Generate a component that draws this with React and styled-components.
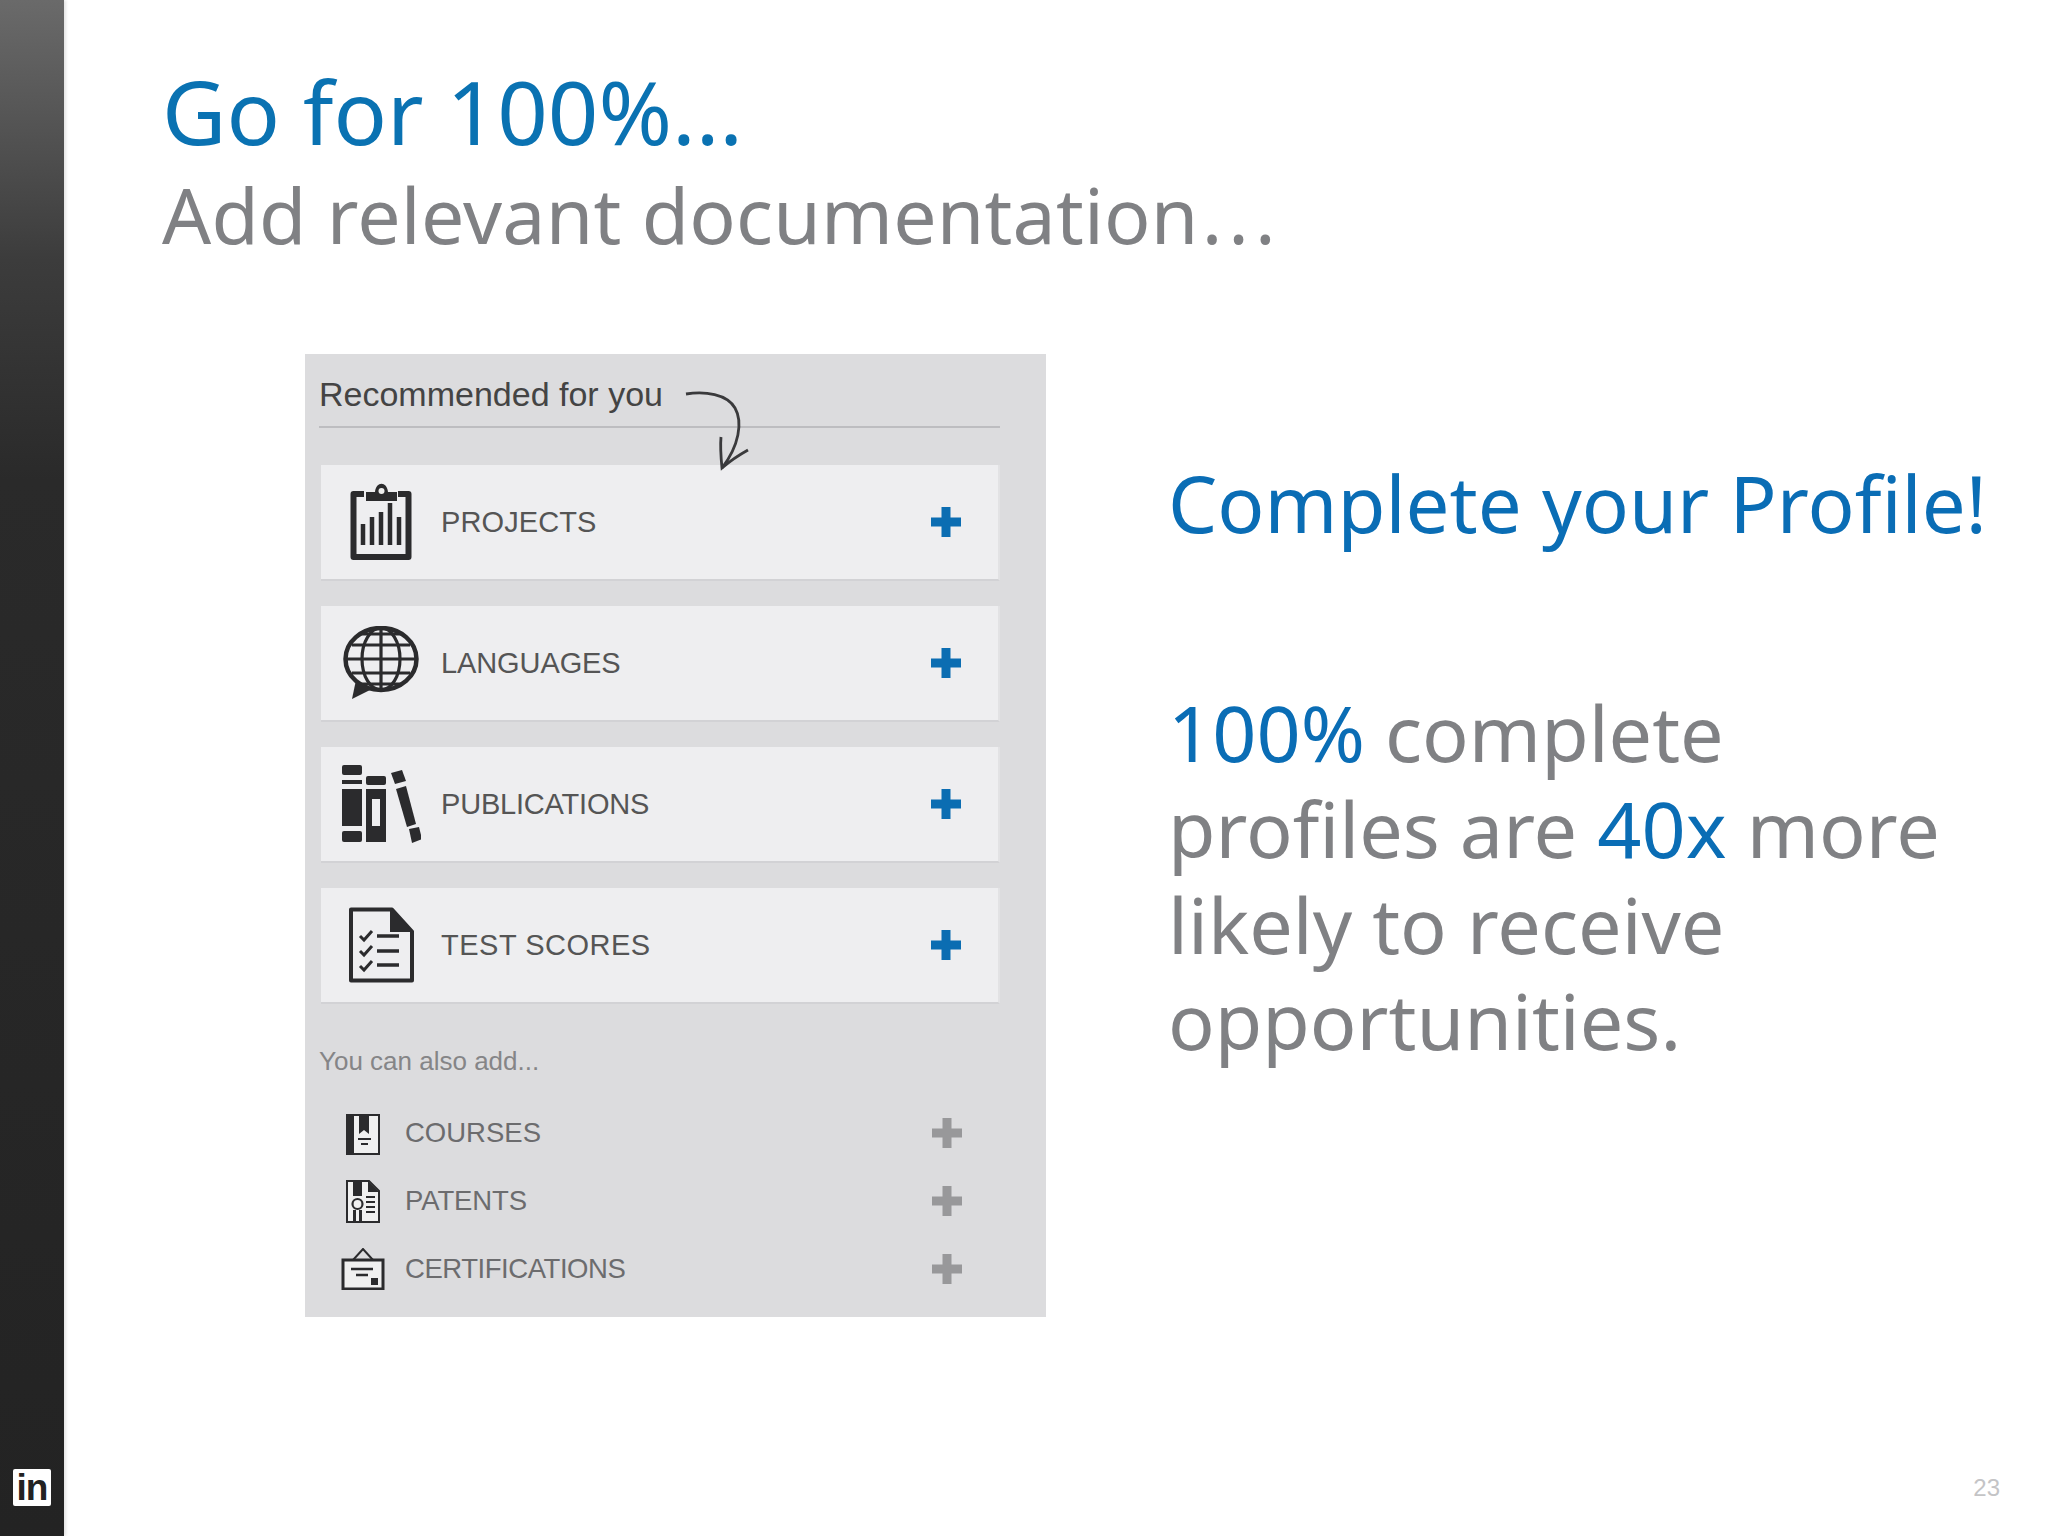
import React from "react";
import styled, { createGlobalStyle } from "styled-components";

const Global = createGlobalStyle`
  html, body { margin: 0; padding: 0; background: #fff; }
  #root { width: 2048px; height: 1536px; overflow: hidden; }
`;
const Slide = styled.div`
  display: flex; width: 2048px; height: 1536px; background: #fff;
  font-family: "Noto Sans", "Open Sans", sans-serif;
`;
const Sidebar = styled.aside`
  width: 64px; flex: none; box-sizing: border-box;
  display: flex; flex-direction: column; justify-content: flex-end; align-items: flex-start;
  padding: 0 0 30px 13px;
  background: linear-gradient(180deg, #6a6a6a 0, #3c3c3c 260px, #2a2a2a 480px, #232323 100%);
  box-shadow: 2px 0 3px #e4e4e4;
`;
const LinkedInBadge = styled.div`
  width: 38px; height: 37px; background: #fff; border-radius: 2px;
  display: flex; align-items: center; justify-content: center;
  font: 700 37px/37px "Liberation Sans", sans-serif; letter-spacing: -1px; color: #222;
`;
const Main = styled.main`
  flex: 1; min-width: 0; display: flex; flex-direction: column;
  padding: 56px 48px 0 98px;
`;
const Title = styled.h1`
  margin: 0; font-weight: 400; font-size: 88.500px; line-height: 110px; color: #0a72b2;
`;
const Subtitle = styled.h2`
  margin: -1px 0 0; font-weight: 400; font-size: 77px; line-height: 100px; color: #808184;
  letter-spacing: 0.2px;
`;
const Dots = styled.span`
  margin-left: 3px; letter-spacing: 6px;
`;
const Content = styled.div`
  display: flex; align-items: flex-start; margin-top: 89px; padding-left: 143px;
`;
const Panel = styled.section`
  position: relative; width: 741px; height: 963px; flex: none; box-sizing: border-box;
  background: #dcdcde; padding: 0 46px 0 16px;
  font-family: "Liberation Sans", Arial, sans-serif;
`;
const PanelHead = styled.div`
  height: 74px; box-sizing: border-box; border-bottom: 2px solid #bdbdc0;
  margin: 0 0 37px -2px; padding-top: 20px;
  font-size: 34px; line-height: 40px; color: #444;
`;
const Arrow = styled.svg`
  position: absolute; left: 378px; top: 34px; width: 70px; height: 84px;
`;
const CardList = styled.div`
  display: flex; flex-direction: column; gap: 25px;
`;
const Card = styled.div`
  height: 116px; box-sizing: border-box; display: flex; align-items: center;
  background: #eeeef0; border-bottom: 2px solid #d2d2d5; border-right: 2px solid #e2e2e4;
  padding-right: 36px;
`;
const CardIcon = styled.div`
  width: 120px; flex: none; display: flex; justify-content: center; align-items: center;
`;
const CardLabel = styled.span`
  flex: 1; font-size: 29px; line-height: 34px; color: #555;
  letter-spacing: ${(p) => p.$track}px;
`;
const PlusIcon = styled.svg`
  width: 32px; height: 32px; flex: none; margin-right: ${(p) => p.$shift}px;
`;
const AlsoLabel = styled.div`
  margin: 39px 0 20px -2px; font-size: 26px; line-height: 36px; color: #858587;
`;
const SmallRow = styled.div`
  height: 68px; display: flex; align-items: center; padding-right: 36px;
`;
const SmallIcon = styled.div`
  width: 84px; flex: none; display: flex; justify-content: center; align-items: center;
`;
const SmallLabel = styled.span`
  flex: 1; font-size: 27.5px; line-height: 34px; color: #6c6c6e;
  letter-spacing: ${(p) => p.$track}px;
`;
const Pitch = styled.div`
  margin-left: 122px; width: 860px; padding-top: 99px; flex: none;
`;
const Headline = styled.div`
  font-size: 78px; line-height: 100px; color: #0a6db5; white-space: nowrap;
`;
const Body = styled.p`
  margin: 131px 0 0; font-size: 77.300px; line-height: 96px; color: #808184; white-space: nowrap;
`;
const Accent = styled.span`
  color: #0a6db5;
`;
const Footer = styled.footer`
  margin-top: auto; padding-bottom: 34px; text-align: right;
  font: 400 24px/28px "Liberation Sans", sans-serif; color: #c4c4c6;
`;

const INK = "#2b2b2d";

const ProjectsIcon = () => (
  <svg width="62" height="78" viewBox="0 0 62 78">
    <path d="M14 11H3.500v63h55V11H48" fill="none" stroke={INK} strokeWidth="6" strokeLinejoin="round" />
    <path d="M16 18V9h9c1-11 12-11 13 0h9v9z" fill={INK} />
    <circle cx="31.500" cy="8" r="3" fill="#eee" />
    <path d="M13 62V41M22 62V34M31 62V29M40 62V20M49 62V34" stroke={INK} strokeWidth="4.500" fill="none" />
  </svg>
);
const GlobeIcon = () => (
  <svg width="76" height="74" viewBox="0 0 76 74" fill="none" stroke={INK} strokeWidth="3.200">
    <ellipse cx="38" cy="33" rx="35.500" ry="31" strokeWidth="4.500" />
    <ellipse cx="38" cy="33" rx="19" ry="31" />
    <path d="M38 2v62M3 33h70M9 19h58M9 47h58M18 8h40M18 58h40" />
    <path d="M13 54 9 73l20-10z" fill={INK} stroke="none" />
  </svg>
);
const BooksIcon = () => (
  <svg width="80" height="78" viewBox="0 0 80 78" fill={INK}>
    <rect x="1" y="0" width="20" height="10" rx="2" />
    <rect x="1" y="15" width="20" height="4" />
    <rect x="1" y="24" width="20" height="37" />
    <rect x="1" y="66" width="20" height="11" rx="2" />
    <rect x="25" y="11" width="20" height="9" rx="2" />
    <path d="M25 24h20v53H25zM31 34v27h8V34z" fillRule="evenodd" />
    <path d="M50 8l11-3 4 11-11 3z" />
    <path d="M55 24l10-3 10 38-9 3z" />
    <path d="M68 64l10-2 3 12-10 4z" />
  </svg>
);
const ScoresIcon = () => (
  <svg width="66" height="76" viewBox="0 0 66 76">
    <path d="M3 2.500h41l20 22V73.500H3z" fill="none" stroke={INK} strokeWidth="4" strokeLinejoin="round" />
    <path d="M42 2l22 23H42z" fill={INK} />
    <path d="M12 29l4 4 8-9M12 44l4 4 8-9M12 59l4 4 8-9" fill="none" stroke={INK} strokeWidth="3" />
    <path d="M29 29h22M29 44h22M29 58h22" stroke={INK} strokeWidth="3.600" />
  </svg>
);
const CoursesIcon = () => (
  <svg width="34" height="43" viewBox="0 0 34 43">
    <path d="M1 3h32v39H1z" fill="#f0f0f0" stroke={INK} strokeWidth="2" />
    <path d="M1 3h7v39H1z" fill={INK} />
    <path d="M13 3h10v19l-5-4-5 4z" fill={INK} />
    <path d="M12 27h13M15 32h7" stroke={INK} strokeWidth="2" />
  </svg>
);
const PatentsIcon = () => (
  <svg width="34" height="43" viewBox="0 0 34 43">
    <path d="M1 1h22l10 10v31H1z" fill="#f0f0f0" stroke={INK} strokeWidth="2" />
    <path d="M22 1l11 11H22z" fill={INK} />
    <path d="M7 1h9v15H7zM7 30h3v11H7zM13 30h3v11h-3z" fill={INK} />
    <circle cx="11.500" cy="24" r="5" fill="none" stroke={INK} strokeWidth="2.200" />
    <path d="M20 17h9M20 22h9M20 27h9M20 32h9" stroke={INK} strokeWidth="2" />
  </svg>
);
const CertIcon = () => (
  <svg width="44" height="42" viewBox="0 0 44 42">
    <path d="M12 12 22 1l10 11" fill="none" stroke={INK} strokeWidth="2" />
    <rect x="2" y="12" width="40" height="29" fill="#f0f0f0" stroke={INK} strokeWidth="3" />
    <path d="M10 21h22M15 27h12" stroke={INK} strokeWidth="2.400" />
    <rect x="30" y="30" width="7" height="7" fill={INK} />
  </svg>
);
const Plus = ({ color, shift = 0 }) => (
  <PlusIcon viewBox="0 0 32 32" $shift={shift}>
    <path d="M16 1v30M1 16h30" stroke={color} strokeWidth="9" />
  </PlusIcon>
);

const cards = [
  ["PROJECTS", ProjectsIcon, 0.1],
  ["LANGUAGES", GlobeIcon, -0.1],
  ["PUBLICATIONS", BooksIcon, -0.2],
  ["TEST SCORES", ScoresIcon, 0.5],
];
const extras = [
  ["COURSES", CoursesIcon, 0],
  ["PATENTS", PatentsIcon, -0.1],
  ["CERTIFICATIONS", CertIcon, -0.45],
];

export default function App() {
  return (
    <Slide>
      <Global />
      <Sidebar>
        <LinkedInBadge>in</LinkedInBadge>
      </Sidebar>
      <Main>
        <Title>Go for 100%...</Title>
        <Subtitle>Add relevant documentation<Dots>...</Dots></Subtitle>
        <Content>
          <Panel>
            <PanelHead>Recommended for you</PanelHead>
            <Arrow viewBox="0 0 70 84" fill="none" stroke="#3a3a3c" strokeWidth="2.800">
              <path d="M3 6C22 3 44 6 52 20 60 34 56 58 39 80" />
              <path d="M38 49C37 60 38 70 39 80 47 73 56 67 65 62" />
            </Arrow>
            <CardList>
              {cards.map(([label, Icon, track]) => (
                <Card key={label}>
                  <CardIcon><Icon /></CardIcon>
                  <CardLabel $track={track}>{label}</CardLabel>
                  <Plus color="#0b6db2" />
                </Card>
              ))}
            </CardList>
            <AlsoLabel>You can also add...</AlsoLabel>
            {extras.map(([label, Icon, track]) => (
              <SmallRow key={label}>
                <SmallIcon><Icon /></SmallIcon>
                <SmallLabel $track={track}>{label}</SmallLabel>
                <Plus color="#98989a" shift={1} />
              </SmallRow>
            ))}
          </Panel>
          <Pitch>
            <Headline>Complete your Profile!</Headline>
            <Body>
              <Accent>100%</Accent> complete
              <br />
              profiles are <Accent>40x</Accent> more
              <br />
              likely to receive
              <br />
              opportunities.
            </Body>
          </Pitch>
        </Content>
        <Footer>23</Footer>
      </Main>
    </Slide>
  );
}
